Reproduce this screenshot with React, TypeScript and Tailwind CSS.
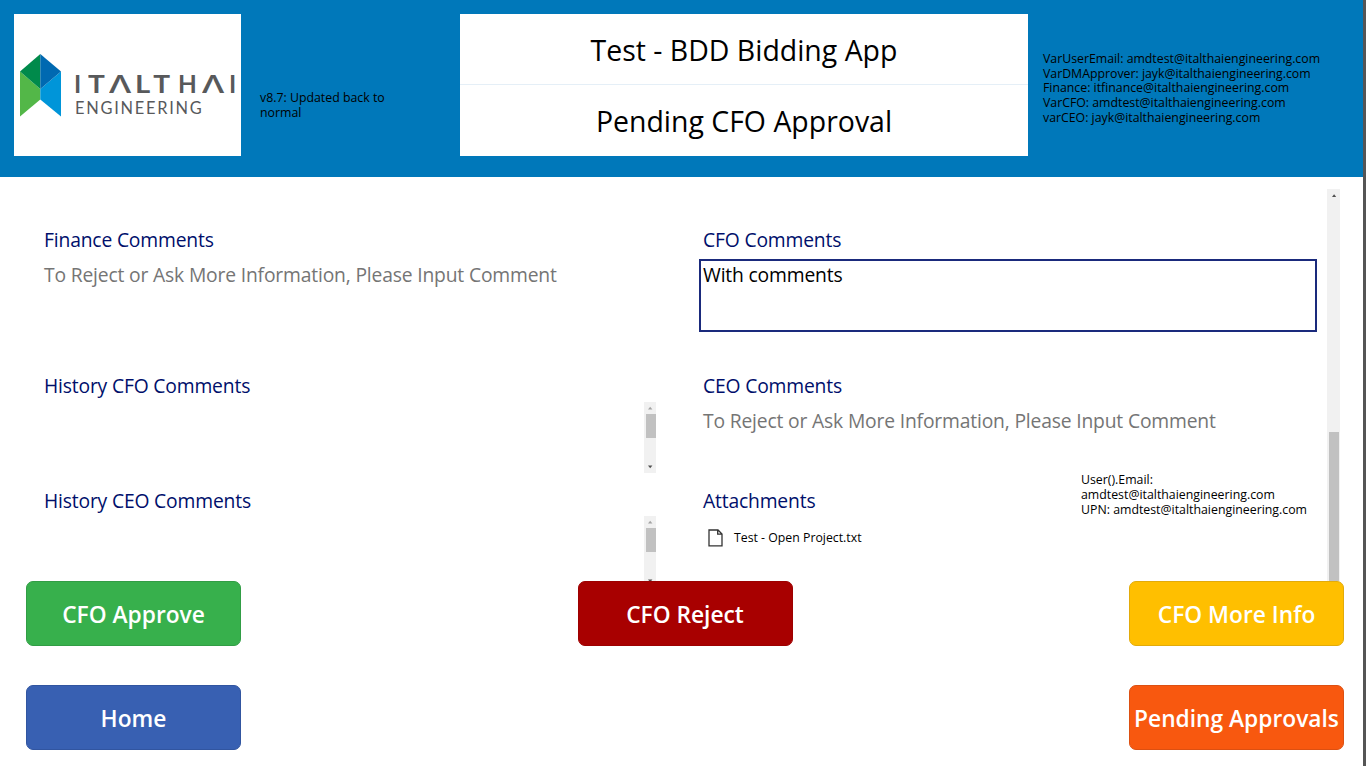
import type { ReactNode } from "react";

function Label({ children }: { children: ReactNode }) {
  return <h2 className="h-[26px] whitespace-nowrap text-[19.3px] leading-[26px] tracking-[-0.17px] text-[#000f6b]">{children}</h2>;
}

function Hint() {
  return (
    <p className="h-[26px] whitespace-nowrap text-[19.3px] leading-[26px] tracking-[-0.17px] text-[#757575]">
      To Reject or Ask More Information, Please Input Comment
    </p>
  );
}

function ActionButton({ label, tone }: { label: string; tone: string }) {
  return (
    <button
      className={`flex h-[65px] w-[215px] items-center justify-center whitespace-nowrap rounded-[7px] border-[1.5px] pt-[2px] text-[22.76px] font-semibold leading-8 text-white ${tone}`}
    >
      {label}
    </button>
  );
}

function MiniScroll({ height }: { height: string }) {
  return (
    <div className={`flex w-3 flex-col items-center overflow-hidden bg-[#f1f1f1] ${height}`}>
      <svg className="h-3 w-3 shrink-0" viewBox="0 0 12 12">
        <path d="M4 7.5 L6.2 4.7 L8.4 7.5Z" fill="#a3a3a3" />
      </svg>
      <div className="ml-px h-6 w-[10px] shrink-0 bg-[#c1c1c1]" />
      <div className="h-[23px] shrink-0" />
      <svg className="h-3 w-3 shrink-0" viewBox="0 0 12 12">
        <path d="M4 4.5 L6.2 7.3 L8.4 4.5Z" fill="#505050" />
      </svg>
    </div>
  );
}

function Logo() {
  return (
    <div className="flex h-[142px] w-[227px] bg-white pl-[6px] pt-[40px]">
      <svg width="41" height="63" viewBox="0 0 41 63" className="-ml-[0.5px] shrink-0">
        <path d="M0 17.5 L20.3 35 V45.5 L0 62.5Z" fill="#53b748" />
        <path d="M41 17.5 L20.3 35 V45.5 L41 62.5Z" fill="#0095d9" />
        <path d="M20.3 0 V35 L0 17.5Z" fill="#008a4b" />
        <path d="M20.3 0 V35 L41 17.5Z" fill="#0069b1" />
      </svg>
      <div className="ml-[14.5px] mt-[15px] font-['Lato'] text-[#58595b]">
        <div className="grid h-[28px] w-[166px] grid-cols-[13px_21px_27px_17px_26px_24px_28px_9px] text-[24.4px] font-bold leading-[29px]">
          <span className="-ml-px">I</span>
          <span className="origin-left scale-x-115">T</span>
          <span className="origin-left scale-x-145 font-['Open_Sans'] font-semibold">Λ</span>
          <span className="-ml-px origin-left scale-x-120">L</span>
          <span className="-ml-px origin-left scale-x-115 pl-px">T</span>
          <span className="-ml-px">H</span>
          <span className="-ml-px origin-left scale-x-145 font-['Open_Sans'] font-semibold">Λ</span>
          <span className="-ml-[2px]">I</span>
        </div>
        <div className="h-5 whitespace-nowrap pt-px text-[16.4px] leading-5 tracking-[1.75px]">ENGINEERING</div>
      </div>
    </div>
  );
}

export default function App() {
  return (
    <div className="flex h-[766px] w-[1366px] flex-col overflow-hidden border-r-[3px] border-[#555555] bg-white font-['Open_Sans',sans-serif] text-black">
      <header className="flex h-[177px] shrink-0 bg-[#0078ba] pl-[14px] pt-[14px]">
        <Logo />
        <p className="ml-[19px] mt-[76px] w-[200px] text-[12.33px] leading-[15px]">
          v8.7: Updated back to
          <br />
          normal
        </p>
        <div className="flex h-[142px] w-[568px] shrink-0 flex-col bg-white text-center text-[28.45px]">
          <h1 className="h-[71px] border-b border-[#e5eff7] leading-[72px]">Test - BDD Bidding App</h1>
          <p className="h-[71px] leading-[72px]">Pending CFO Approval</p>
        </div>
        <div className="ml-[15px] mt-[38px] whitespace-nowrap text-[12.3px] leading-[14.7px]">
          <p>VarUserEmail: amdtest@italthaiengineering.com</p>
          <p>VarDMApprover: jayk@italthaiengineering.com</p>
          <p>Finance: itfinance@italthaiengineering.com</p>
          <p>VarCFO: amdtest@italthaiengineering.com</p>
          <p>varCEO: jayk@italthaiengineering.com</p>
        </div>
      </header>

      <main className="flex h-[404px] shrink-0 overflow-hidden">
        <section className="ml-[44px] w-[655px] shrink-0 pt-[50px]">
          <Label>Finance Comments</Label>
          <div className="h-[120px] pt-[9px]">
            <Hint />
          </div>
          <Label>History CFO Comments</Label>
          <div className="h-[89px] pl-[600px] pt-[3px]">
            <MiniScroll height="h-[71px]" />
          </div>
          <Label>History CEO Comments</Label>
          <div className="pl-[600px] pt-[2px]">
            <MiniScroll height="h-[66px]" />
          </div>
        </section>

        <section className="w-[618px] shrink-0 pt-[50px]">
          <div className="pl-1">
            <Label>CFO Comments</Label>
          </div>
          <div className="h-[120px] pt-[6px]">
            <div className="h-[73px] border-2 border-[#1a2a7c] pl-[2px] pt-px text-[19.3px] leading-[26px] tracking-[-0.17px]">
              With comments
            </div>
          </div>
          <div className="pl-1">
            <Label>CEO Comments</Label>
            <div className="pt-[9px]">
              <Hint />
            </div>
          </div>
          <div className="mt-[37px] flex pl-1">
            <div className="mt-[17px] w-[378px] shrink-0">
              <Label>Attachments</Label>
              <div className="mt-[13px] flex h-[22px] items-center pl-[5px]">
                <svg width="16" height="18" viewBox="0 0 16 18" fill="none" stroke="#333333" strokeWidth="1.3">
                  <path d="M1 1 H10 L14 5 V16.8 H1Z M9.7 1 V5.2 H14" />
                </svg>
                <span className="ml-[10px] text-[12.3px] leading-4">Test - Open Project.txt</span>
              </div>
            </div>
            <div className="mt-px whitespace-nowrap text-[12.33px] leading-[15px]">
              <p>User().Email:</p>
              <p>amdtest@italthaiengineering.com</p>
              <p>UPN: amdtest@italthaiengineering.com</p>
            </div>
          </div>
        </section>

        <div className="ml-[10px] mt-[12px] flex h-[392px] w-[13px] shrink-0 flex-col items-center bg-[#f1f1f1]">
          <svg className="h-[243px] w-3 shrink-0" viewBox="0 0 12 243">
            <path d="M4 8 L6.1 5.2 L8.2 8Z" fill="#505050" />
          </svg>
          <div className="h-[149px] w-[10px] bg-[#c1c1c1]" />
        </div>
      </main>

      <footer className="flex flex-col gap-[39px] pl-[26px] pr-[19px]">
        <div className="flex justify-between">
          <ActionButton label="CFO Approve" tone="bg-[#37b04c] border-[#319d45]" />
          <ActionButton label="CFO Reject" tone="bg-[#a80000] border-[#9d0000]" />
          <ActionButton label="CFO More Info" tone="bg-[#ffbf00] border-[#e2ab0a]" />
        </div>
        <div className="flex justify-between">
          <ActionButton label="Home" tone="bg-[#3860b2] border-[#3155a0]" />
          <ActionButton label="Pending Approvals" tone="bg-[#f8580f] border-[#dc5012]" />
        </div>
      </footer>
    </div>
  );
}
